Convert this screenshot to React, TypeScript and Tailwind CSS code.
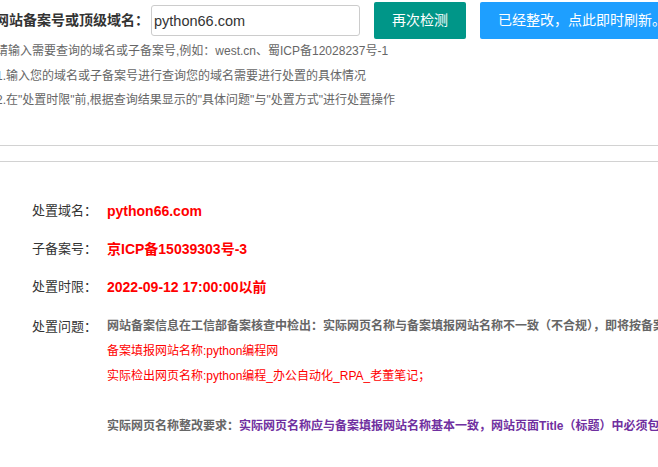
import React from "react";

const font = "font-['Liberation_Sans','Noto_Sans_CJK_SC',sans-serif]";

export default function App() {
  return (
    <div className={`w-[658px] h-[467px] overflow-hidden bg-white ${font}`}>
      {/* 查询栏 */}
      <div className="flex items-center h-[37px] mt-[2px] -ml-[5px] whitespace-nowrap">
        <span className="w-[156px] shrink-0 text-[14px] font-bold text-[#333]">网站备案号或顶级域名：</span>
        <input
          type="text"
          readOnly
          value="python66.com"
          className="w-[209px] h-[31px] shrink-0 border border-[#ccc] rounded-[3px] pl-[2px] text-[14.5px] text-[#333] outline-none"
        />
        <button className="ml-[14px] w-[92px] h-[37px] shrink-0 bg-[#009688] text-white text-[14px] rounded-[2px]">再次检测</button>
        <button className="ml-[14px] h-[37px] shrink-0 px-[18px] bg-[#1E9FFF] text-white text-[14px] rounded-[2px]">已经整改，点此即时刷新。</button>
      </div>

      {/* 说明 */}
      <div className="-ml-[4px] text-[12px] leading-[24.5px] text-[#666] whitespace-nowrap">
        <p>请输入需要查询的域名或子备案号,例如：west.cn、蜀ICP备12028237号-1</p>
        <p>1.输入您的域名或子备案号进行查询您的域名需要进行处置的具体情况</p>
        <p>2.在"处置时限"前,根据查询结果显示的"具体问题"与"处置方式"进行处置操作</p>
      </div>

      <div className="mt-[32.5px] h-[17px] border-y border-[#d2d2d2]" />

      {/* 结果 */}
      <div className="mt-[30px] pl-[32px] whitespace-nowrap">
        <div className="flex items-center h-[38px]">
          <span className="w-[75px] shrink-0 text-[13px] text-[#333]">处置域名：</span>
          <span className="text-[14px] font-bold text-[#ff0000]">python66.com</span>
        </div>
        <div className="flex items-center h-[38px]">
          <span className="w-[75px] shrink-0 text-[13px] text-[#333]">子备案号：</span>
          <span className="text-[14px] font-bold text-[#ff0000]">京ICP备15039303号-3</span>
        </div>
        <div className="flex items-center h-[38px]">
          <span className="w-[75px] shrink-0 text-[13px] text-[#333]">处置时限：</span>
          <span className="text-[14px] font-bold text-[#ff0000]">2022-09-12 17:00:00以前</span>
        </div>
        <div className="flex items-start mt-[8px]">
          <span className="w-[75px] shrink-0 text-[13px] leading-[25px] text-[#333]">处置问题：</span>
          <div className="text-[12px] leading-[25px]">
            <p className="font-bold text-[#666]">网站备案信息在工信部备案核查中检出：实际网页名称与备案填报网站名称不一致（不合规），即将按备案管理规定进行处置</p>
            <p className="text-[#ff0000]">备案填报网站名称:python编程网</p>
            <p className="text-[#ff0000]">实际检出网页名称:python编程_办公自动化_RPA_老董笔记；</p>
            <p>&nbsp;</p>
            <p className="font-bold text-[#666]">
              实际网页名称整改要求：<span className="text-[#7030a0]">实际网页名称应与备案填报网站名称基本一致，网站页面Title（标题）中必须包含备案名称</span>
            </p>
          </div>
        </div>
      </div>
    </div>
  );
}
